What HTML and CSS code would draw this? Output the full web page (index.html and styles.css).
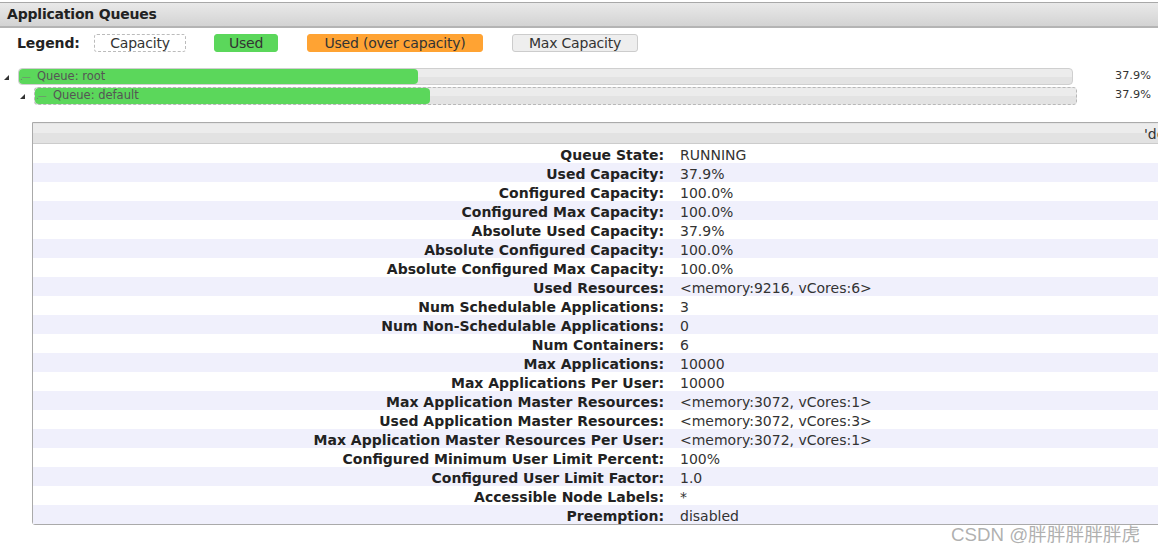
FILE: index.html
```html
<!DOCTYPE html>
<html>
<head>
<meta charset="utf-8">
<link rel="stylesheet" href="styles.css">
</head>
<body>
<div class="page">
  <div class="titlebar">Application Queues</div>
  <div class="legend">
    <span class="legend-label">Legend:</span>
    <span class="lg lg-cap">Capacity</span>
    <span class="lg lg-used">Used</span>
    <span class="lg lg-over">Used (over capacity)</span>
    <span class="lg lg-max">Max Capacity</span>
  </div>
  <div class="tree">
    <div class="qrow">
      <span class="tri"></span>
      <div class="bar bar-root">
        <div class="fill" style="width:37.9%"></div>
        <span class="qlabel"><i class="anc">.—</i>Queue: root</span>
      </div>
      <span class="pct">37.9%</span>
    </div>
    <div class="qrow qrow-child">
      <span class="tri"></span>
      <div class="bar bar-child">
        <div class="fill" style="width:37.9%"></div>
        <span class="qlabel"><i class="anc">.—</i>Queue: default</span>
      </div>
      <span class="pct">37.9%</span>
    </div>
  </div>
  <div class="panel">
    <div class="panel-head"><span class="panel-title">'default' Queue Status</span></div>
    <table class="info">
      <tr><th>Queue State:</th><td>RUNNING</td></tr>
      <tr><th>Used Capacity:</th><td>37.9%</td></tr>
      <tr><th>Configured Capacity:</th><td>100.0%</td></tr>
      <tr><th>Configured Max Capacity:</th><td>100.0%</td></tr>
      <tr><th>Absolute Used Capacity:</th><td>37.9%</td></tr>
      <tr><th>Absolute Configured Capacity:</th><td>100.0%</td></tr>
      <tr><th>Absolute Configured Max Capacity:</th><td>100.0%</td></tr>
      <tr><th>Used Resources:</th><td>&lt;memory:9216, vCores:6&gt;</td></tr>
      <tr><th>Num Schedulable Applications:</th><td>3</td></tr>
      <tr><th>Num Non-Schedulable Applications:</th><td>0</td></tr>
      <tr><th>Num Containers:</th><td>6</td></tr>
      <tr><th>Max Applications:</th><td>10000</td></tr>
      <tr><th>Max Applications Per User:</th><td>10000</td></tr>
      <tr><th>Max Application Master Resources:</th><td>&lt;memory:3072, vCores:1&gt;</td></tr>
      <tr><th>Used Application Master Resources:</th><td>&lt;memory:3072, vCores:3&gt;</td></tr>
      <tr><th>Max Application Master Resources Per User:</th><td>&lt;memory:3072, vCores:1&gt;</td></tr>
      <tr><th>Configured Minimum User Limit Percent:</th><td>100%</td></tr>
      <tr><th>Configured User Limit Factor:</th><td>1.0</td></tr>
      <tr><th>Accessible Node Labels:</th><td>*</td></tr>
      <tr><th>Preemption:</th><td>disabled</td></tr>
    </table>
  </div>
  <div class="watermark">CSDN @胖胖胖胖胖虎</div>
</div>
</body>
</html>
```

FILE: styles.css
```css
html, body {
  margin: 0;
  padding: 0;
  background: #fff;
  overflow: hidden;
}
body {
  font-family: "DejaVu Sans", Verdana, sans-serif;
  color: #222;
  width: 1158px;
  height: 550px;
}
.page {
  position: relative;
  width: 1158px;
  height: 550px;
  overflow: hidden;
  padding-top: 2px;
  box-sizing: border-box;
}
.titlebar {
  height: 23px;
  border-top: 1px solid #a8a8a8;
  border-bottom: 2px solid #b4b4b4;
  background: linear-gradient(#e9e9e9, #d3d3d3);
  font-weight: bold;
  font-size: 14px;
  line-height: 23px;
  padding-left: 7px;
  color: #222;
  letter-spacing: -0.2px;
}
.legend {
  display: flex;
  align-items: center;
  margin-top: 6px;
  height: 18px;
  padding-left: 17px;
  font-size: 14px;
}
.legend-label {
  font-weight: bold;
  width: 77px;
  letter-spacing: -0.1px;
}
.lg {
  box-sizing: border-box;
  height: 18px;
  line-height: 17px;
  text-align: center;
  border-radius: 3px;
  color: #333;
  letter-spacing: -0.2px;
}
.lg-cap {
  width: 92px;
  border: 1px dashed #bbb;
}
.lg-used {
  margin-left: 28px;
  width: 64px;
  background: #5bd75b;
  border: 1px solid #5bd75b;
}
.lg-over {
  margin-left: 29px;
  width: 176px;
  background: #ffa333;
  border: 1px solid #ffa333;
}
.lg-max {
  margin-left: 29px;
  width: 126px;
  background: #eee;
  border: 1px solid #ccc;
}
.tree {
  margin-top: 16px;
}
.qrow {
  display: flex;
  align-items: center;
  height: 17px;
  margin-bottom: 2px;
  position: relative;
}
.tri {
  width: 0;
  height: 0;
  border-left: 5px solid transparent;
  border-bottom: 5px solid #333;
  margin-left: 4px;
  margin-right: 9px;
  margin-top: 2px;
}
.qrow-child .tri {
  margin-left: 20px;
}
.bar {
  position: relative;
  box-sizing: border-box;
  height: 17px;
  background: linear-gradient(#ececec 50%, #e3e3e3 50%);
  border: 1px solid #cfcfcf;
  border-radius: 4px;
}
.bar-root {
  width: 1055px;
}
.bar-child {
  width: 1043px;
  height: 18px;
  border: 1px dashed #b8b8b8;
}
.fill {
  position: absolute;
  left: 0;
  top: 0;
  bottom: 0;
  background: #5bd75b;
  border-radius: 4px;
}
.qlabel {
  position: absolute;
  left: 1px;
  top: 0;
  font-size: 11.5px;
  line-height: 15px;
  color: #555;
}
.anc {
  font-style: normal;
  color: #777;
  font-size: 9px;
  letter-spacing: -1px;
  margin-right: 7px;
}
.pct {
  position: absolute;
  left: 1115px;
  font-size: 11.3px;
  color: #333;
  top: 0;
  line-height: 15px;
}
.panel {
  margin-top: 18px;
  margin-left: 32px;
  width: 1300px;
  border: 1px solid #aaa;
  border-radius: 0 0 0 3px;
}
.panel-head {
  height: 19px;
  border-bottom: 1px solid #ccc;
  border-top: 1px solid #e4e4e4;
  background: linear-gradient(#ececec 50%, #e2e2e2 50%);
  position: relative;
  font-size: 14px;
  line-height: 21px;
}
.panel-title {
  position: absolute;
  left: 1111px;
  color: #333;
}
.info {
  border-collapse: collapse;
  width: 100%;
  font-size: 14px;
}
.info tr {
  height: 19px;
}
.info tr:nth-child(even) {
  background: #f0f0fc;
}
.info th,
.info td {
  height: 15px;
  line-height: 15px;
  padding-top: 4px;
  padding-bottom: 0;
  white-space: nowrap;
}
.info th {
  width: 631px;
  text-align: right;
  padding-left: 0;
  padding-right: 16px;
  font-weight: bold;
  color: #222;
}
.info td {
  padding-left: 0;
  padding-right: 0;
  text-align: left;
  color: #333;
}
.watermark {
  position: absolute;
  left: 951px;
  top: 519px;
  font-family: "Liberation Sans", "Noto Sans CJK SC", sans-serif;
  font-size: 18.7px;
  color: rgba(150,150,150,0.75);
}
```
